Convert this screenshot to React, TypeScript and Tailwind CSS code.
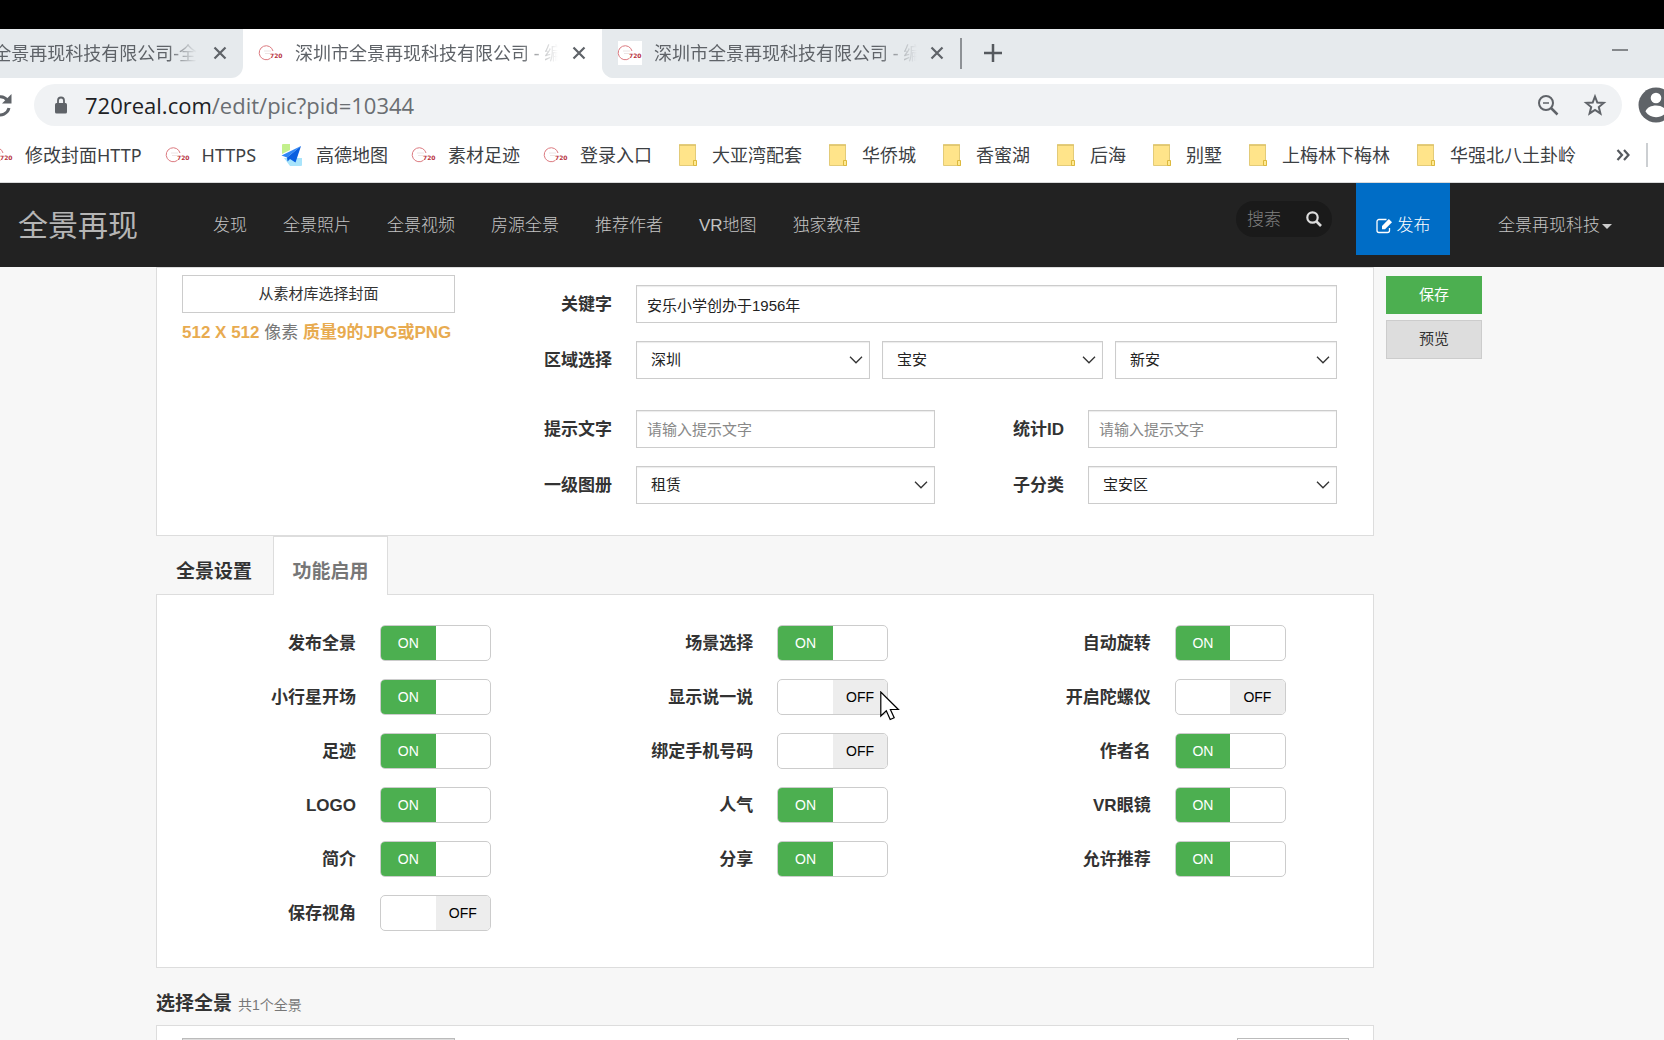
import { useState } from "react";
import type { ReactNode } from "react";

function SiteIcon() {
  return (
    <svg viewBox="0 0 24 24" className="size-6 shrink-0 overflow-visible bg-white" aria-hidden="true">
      <path d="M14 10A7 7 0 1 0 11.500 17.300" fill="none" stroke="#dc7a80" strokeWidth="1" />
      <path d="M5 10h7M6 12.500h5" stroke="#ece4e4" strokeWidth="1" />
      <text x="11" y="16.5" fontSize="6" fontWeight="700" fill="#b8323c" fontFamily="DejaVu Sans, sans-serif">
        720
      </text>
    </svg>
  );
}

function MapIcon() {
  return (
    <svg viewBox="0 0 24 24" className="size-6 shrink-0" aria-hidden="true">
      <path d="M2 2a1 1 0 0 1 1-1h7v6l-8 4z" fill="#c3f08c" />
      <path d="M4 15h18v7a1 1 0 0 1-1 1H10z" fill="#a9e4fb" />
      <path d="M21 3 1.500 12.500l5.500 2z" fill="#2f86f6" />
      <path d="M21 3 7 14.500l.5 4 2.500-2.500 5.500 3.500z" fill="#0a5fe0" />
    </svg>
  );
}

function FolderIcon() {
  return (
    <svg viewBox="0 0 24 24" className="size-6 shrink-0" aria-hidden="true">
      <path d="M3.500 2h16v15.500l1 .5v4.500h-17z" fill="#ffe48a" stroke="#e3cb78" />
      <path d="M17.500 22.500v-5h3v5z" fill="#ffe991" stroke="#dcb93e" />
      <path d="M3 2h17" stroke="#dcc36a" strokeWidth="1.500" />
    </svg>
  );
}

function CloseIcon() {
  return (
    <svg viewBox="0 0 14 14" className="size-3.5" aria-hidden="true">
      <path d="m1.500 1.500 11 11m0-11-11 11" stroke="#5f6368" strokeWidth="2.200" />
    </svg>
  );
}

function Tab({ title, active, cut }: { title: string; active?: boolean; cut?: boolean }) {
  return (
    <div
      className={
        active
          ? "flex w-[359px] shrink-0 items-center rounded-t-lg bg-white px-4 pb-0.5"
          : cut
            ? "flex w-[243px] shrink-0 items-center justify-end rounded-br-xl bg-[#e6eaed] pb-0.5 pr-4"
            : "flex w-[358px] shrink-0 items-center rounded-bl-xl bg-[#e6eaed] px-4 pb-0.5"
      }
    >
      {!cut && <SiteIcon />}
      <span
        className={
          cut
            ? "flex w-[199px] justify-end overflow-hidden whitespace-nowrap mask-r-from-85% mask-r-to-100%"
            : "ml-3 w-[263px] overflow-hidden whitespace-nowrap mask-r-from-85% mask-r-to-100%"
        }
      >
        {title}
      </span>
      <button type="button" aria-label="关闭标签页" className={cut ? "ml-4" : "ml-auto"}>
        <CloseIcon />
      </button>
    </div>
  );
}

function Bookmark({ icon, children }: { icon: ReactNode; children: ReactNode }) {
  return (
    <a href="#" className="flex shrink-0 items-center gap-3">
      {icon}
      {children}
    </a>
  );
}

const folders = ["大亚湾配套", "华侨城", "香蜜湖", "后海", "别墅", "上梅林下梅林", "华强北八土卦岭"];

function Browser() {
  return (
    <div className="shrink-0 font-['Noto_Sans','Noto_Sans_CJK_SC',sans-serif] text-lg">
      <div className="h-[29px] bg-black" />
      <div className="flex h-[49px] bg-white text-[#5f6368]">
        <Tab cut title="全景再现科技有限公司-全" />
        <Tab active title="深圳市全景再现科技有限公司 - 编辑" />
        <div className="flex flex-1 rounded-bl-xl bg-[#e6eaed]">
          <Tab title="深圳市全景再现科技有限公司 - 编辑" />
          <div className="my-auto h-[31px] w-0.5 bg-[#8d9195]" />
          <button type="button" aria-label="新标签页" className="mb-0.5 ml-[22px]">
            <svg viewBox="0 0 18 18" className="size-[18px]" aria-hidden="true">
              <path d="M9 0v18M0 9h18" stroke="#55595e" strokeWidth="2.500" />
            </svg>
          </button>
          <button type="button" aria-label="最小化" className="mb-2 ml-auto mr-9">
            <svg viewBox="0 0 16 2" className="h-0.5 w-4" aria-hidden="true">
              <path d="M0 1h16" stroke="#85888b" strokeWidth="2" />
            </svg>
          </button>
        </div>
      </div>
      <div className="flex h-[54px] items-center overflow-hidden bg-white">
        <button type="button" aria-label="重新加载" className="-ml-3 w-6 shrink-0">
          <svg viewBox="0 0 24 24" className="size-6" aria-hidden="true">
            <path d="M19.500 7.500A9 9 0 1 0 21 15" fill="none" stroke="#5f6368" strokeWidth="3" />
            <path d="M23.500 1v9.500H14z" fill="#5f6368" />
          </svg>
        </button>
        <div className="ml-[22px] flex h-[42px] flex-1 items-center rounded-full bg-[#f0f2f4] pl-5 pr-[15px]">
          <svg viewBox="0 0 14 18" className="h-[18px] w-3.5" aria-hidden="true">
            <rect x="1" y="7" width="12" height="10.500" rx="1.500" fill="#5f6368" />
            <path d="M4 8V4.500a3 3 0 0 1 6 0V8" fill="none" stroke="#5f6368" strokeWidth="1.800" />
          </svg>
          <div className="ml-[17px] flex-1 font-['Open_Sans',sans-serif] text-[22px] leading-7 text-[#6a6e72]">
            <span className="text-[#202124]">720real.com</span>/edit/pic?pid=10344
          </div>
          <button type="button" aria-label="缩放">
            <svg viewBox="0 0 22 22" className="size-[22px]" aria-hidden="true">
              <circle cx="9" cy="9" r="7" fill="none" stroke="#5f6368" strokeWidth="2" />
              <path d="M6 9h6" stroke="#5f6368" strokeWidth="1.500" />
              <path d="m14 14 6.500 6.500" stroke="#5f6368" strokeWidth="2.500" />
            </svg>
          </button>
          <button type="button" aria-label="收藏" className="ml-6">
            <svg viewBox="0 0 24 24" className="size-6" aria-hidden="true">
              <path d="m12 3.500 2.300 6 6.500.4-5 4.200 1.600 6.300-5.400-3.500-5.400 3.500 1.600-6.300-5-4.200 6.500-.4z" fill="none" stroke="#5f6368" strokeWidth="2" />
            </svg>
          </button>
        </div>
        <button type="button" aria-label="用户" className="-mr-2.5 ml-4 shrink-0">
          <svg viewBox="0 0 36 36" className="size-9" aria-hidden="true">
            <circle cx="18" cy="18" r="17.500" fill="#5f6368" />
            <circle cx="18" cy="11" r="5.300" fill="#fff" />
            <path d="M7.500 24.500c2.500-8 18.500-8 21 0-4.500 7.500-16.500 7.500-21 0z" fill="#fff" />
          </svg>
        </button>
      </div>
      <div className="flex h-[51px] items-center gap-6 overflow-hidden border-b border-[#d9dadb] bg-white pb-1 text-[#3c4043]">
        <div className="-ml-[11px] flex shrink-0 items-center gap-6">
          <Bookmark icon={<SiteIcon />}>修改封面HTTP</Bookmark>
          <Bookmark icon={<SiteIcon />}>HTTPS</Bookmark>
          <Bookmark icon={<MapIcon />}>高德地图</Bookmark>
          <Bookmark icon={<SiteIcon />}>素材足迹</Bookmark>
          <Bookmark icon={<SiteIcon />}>登录入口</Bookmark>
          {folders.map((name) => (
            <Bookmark key={name} icon={<FolderIcon />}>
              {name}
            </Bookmark>
          ))}
        </div>
        <button type="button" aria-label="更多书签" className="ml-auto">
          <svg viewBox="0 0 14 12" className="h-3 w-3.5" aria-hidden="true">
            <path d="m1.500 1 4.500 5-4.500 5M8 1l4.500 5L8 11" fill="none" stroke="#55595e" strokeWidth="2.200" />
          </svg>
        </button>
        <div className="-ml-2 mr-4 h-6 w-0.5 bg-[#cccfd2]" />
      </div>
    </div>
  );
}

const links = ["发现", "全景照片", "全景视频", "房源全景", "推荐作者", "VR地图", "独家教程"];

function SiteNav() {
  return (
    <nav className="flex h-[84px] shrink-0 items-center bg-[#222] pt-0.5 text-[17px] font-light text-[#c4c4c4]">
      <a href="#" className="mb-0.5 ml-[18px] text-[30px] font-normal text-[#b5b5b5]">
        全景再现
      </a>
      <div className="ml-[75px] flex gap-9">
        {links.map((name) => (
          <a key={name} href="#">
            {name}
          </a>
        ))}
      </div>
      <form className="mb-3.5 ml-auto flex h-9 w-24 items-center rounded-full bg-[#1a1a1a] pl-[11px] pr-2.5">
        <input aria-label="搜索" placeholder="搜索" className="w-10 bg-transparent pt-0.5 outline-none placeholder:text-[#808080]" />
        <button type="button" aria-label="搜索" className="ml-auto">
          <svg viewBox="0 0 16 16" className="size-4" aria-hidden="true">
            <circle cx="6.500" cy="6.500" r="5.200" fill="none" stroke="#ddd" strokeWidth="2.200" />
            <path d="m10.500 10.500 4.500 4.500" stroke="#ddd" strokeWidth="2.600" />
          </svg>
        </button>
      </form>
      <a href="#" className="-mt-0.5 ml-6 flex h-[72px] w-[94px] items-center justify-center gap-1 self-start bg-[#006dc6] pt-3.5 text-white">
        <svg viewBox="0 0 17 16" className="h-4 w-[17px]" aria-hidden="true">
          <path d="M10.500 1.500H3A2 2 0 0 0 1 3.500v9a2 2 0 0 0 2 2h8.500a2 2 0 0 0 2-2V10" fill="none" stroke="#fff" strokeWidth="1.300" />
          <path d="M6 8 12.800 1l3.200 3.200L9 11.200H6z" fill="#fff" />
        </svg>
        发布
      </a>
      <a href="#" className="ml-12 mr-[52px] flex items-center gap-0.5">
        全景再现科技
        <svg viewBox="0 0 10 5" className="h-[5px] w-2.5" aria-hidden="true">
          <path d="M0 0h10L5 5z" fill="#ccc" />
        </svg>
      </a>
    </nav>
  );
}

const box = "h-[38px] w-full border border-[#ccc] bg-white text-[15px] text-[#222] shadow-[inset_0_1px_1px_rgba(0,0,0,0.08)] outline-none";

function Select({ id, label, value }: { id: string; label?: string; value: string }) {
  return (
    <div className="relative min-w-0 flex-1">
      <select id={id} aria-label={label} className={box + " appearance-none pl-3.5 pr-8"}>
        <option>{value}</option>
      </select>
      <svg viewBox="0 0 14 8" className="pointer-events-none absolute right-[7px] top-[15px] h-2 w-3.5" aria-hidden="true">
        <path d="m1 .8 6 6 6-6" fill="none" stroke="#333" strokeWidth="1.300" />
      </svg>
    </div>
  );
}

function Field({ id, label, narrow, children }: { id: string; label: string; narrow?: boolean; children: ReactNode }) {
  return (
    <div className={narrow ? "flex w-[402px] items-center" : "flex min-w-0 flex-1 items-center"}>
      <label
        htmlFor={id}
        className={
          narrow
            ? "w-[129px] shrink-0 pt-0.5 text-right text-[17px] font-bold"
            : "w-[133px] shrink-0 pt-0.5 text-right text-[17px] font-bold"
        }
      >
        {label}
      </label>
      <div className="ml-6 min-w-0 flex-1">{children}</div>
    </div>
  );
}

function InfoPanel() {
  return (
    <section className="flex border border-[#ddd] bg-white pb-[31px] pl-[25px] pr-9 pt-[7px]">
      <div className="w-[273px] shrink-0">
        <button type="button" className="h-[38px] w-full border border-[#ccc] bg-white text-[15px]">
          从素材库选择封面
        </button>
        <p className="mt-[7px] whitespace-nowrap text-[17px] text-[#777]">
          <b className="text-[#e8ab50]">512 X 512</b> 像素 <b className="text-[#e8ab50]">质量9的JPG或PNG</b>
        </p>
      </div>
      <div className="ml-6 flex min-w-0 flex-1 flex-col gap-[18px] pt-2.5">
        <Field id="keyword" label="关键字">
          <input id="keyword" defaultValue="安乐小学创办于1956年" className={box + " px-2.5"} />
        </Field>
        <Field id="city" label="区域选择">
          <div className="grid grid-cols-[234fr_221fr_222fr] gap-3">
            <Select id="city" value="深圳" />
            <Select id="district" label="区" value="宝安" />
            <Select id="street" label="街道" value="新安" />
          </div>
        </Field>
        <div className="mt-[13px] flex">
          <Field id="hint" label="提示文字">
            <input id="hint" placeholder="请输入提示文字" className={box + " px-2.5 placeholder:text-[#888]"} />
          </Field>
          <Field id="stat" label="统计ID" narrow>
            <input id="stat" placeholder="请输入提示文字" className={box + " px-2.5 placeholder:text-[#888]"} />
          </Field>
        </div>
        <div className="flex">
          <Field id="album" label="一级图册">
            <Select id="album" value="租赁" />
          </Field>
          <Field id="sub" label="子分类" narrow>
            <Select id="sub" value="宝安区" />
          </Field>
        </div>
      </div>
    </section>
  );
}

function Toggle({ label, initial }: { label: string; initial: boolean }) {
  const [on, setOn] = useState(initial);
  return (
    <label className="flex items-center gap-6">
      <span className="w-[187px] pt-0.5 text-right text-[17px] font-bold">{label}</span>
      <input type="checkbox" className="sr-only" checked={on} onChange={() => setOn(!on)} />
      <span className="flex h-9 w-[111px] overflow-hidden rounded-[5px] border border-[#ccc] bg-white text-sm leading-[34px]">
        <span className={on ? "flex-1 bg-[#4caf50] text-center text-white" : "flex-1"}>{on && "ON"}</span>
        <span className={on ? "flex-1" : "flex-1 bg-[#ededed] text-center text-black"}>{!on && "OFF"}</span>
      </span>
    </label>
  );
}

const features: [string, boolean][] = [
  ["发布全景", true],
  ["场景选择", true],
  ["自动旋转", true],
  ["小行星开场", true],
  ["显示说一说", false],
  ["开启陀螺仪", false],
  ["足迹", true],
  ["绑定手机号码", false],
  ["作者名", true],
  ["LOGO", true],
  ["人气", true],
  ["VR眼镜", true],
  ["简介", true],
  ["分享", true],
  ["允许推荐", true],
  ["保存视角", false],
];

function FeaturePanel() {
  return (
    <section>
      <div className="flex h-[58px] text-[19px] font-bold">
        <button type="button" className="w-[117px] pl-5 pt-3.5 text-left">
          全景设置
        </button>
        <button type="button" className="relative -mb-px w-[115px] border border-b-0 border-[#ddd] bg-white pt-3 text-[#777]">
          功能启用
        </button>
      </div>
      <div className="grid grid-cols-3 gap-y-[18px] border border-[#ddd] bg-white px-3 pb-9 pt-[30px]">
        {features.map(([label, on]) => (
          <Toggle key={label} label={label} initial={on} />
        ))}
      </div>
    </section>
  );
}

function Pointer() {
  return (
    <svg viewBox="0 0 20 30" className="pointer-events-none absolute left-[880px] top-[691px] h-[30px] w-5" aria-hidden="true">
      <path d="M.8 1v24l5.500-5.200L10.200 28.500l4-1.800-3.800-8.200h8z" fill="#fff" stroke="#000" strokeWidth="1.200" />
    </svg>
  );
}

export default function App() {
  return (
    <div className="relative flex h-screen flex-col overflow-hidden bg-[#f7f7f7] font-['Liberation_Sans','Noto_Sans_CJK_SC',sans-serif] text-[#333]">
      <Browser />
      <SiteNav />
      <main className="flex items-start pl-[156px] pr-[182px]">
        <div className="min-w-0 flex-1">
          <InfoPanel />
          <FeaturePanel />
          <h2 className="flex h-[57px] items-center gap-1.5 pt-4 text-[19px] font-bold">
            选择全景 <small className="text-sm font-normal text-[#777]">共1个全景</small>
          </h2>
          <section className="flex justify-between border border-[#ddd] bg-white pl-[25px] pr-6 pt-3">
            <div className="h-16 w-[273px] border border-[#bbb] bg-[#ddd]" />
            <div className="h-16 w-28 border border-[#bbb]" />
          </section>
        </div>
        <div className="ml-3 flex w-24 flex-col gap-1.5 pt-[9px] text-[15px]">
          <button type="button" className="h-[38px] bg-[#4caf50] text-white">
            保存
          </button>
          <button type="button" className="h-[39px] border border-[#ccc] bg-[#ddd] text-[#333]">
            预览
          </button>
        </div>
      </main>
      <Pointer />
    </div>
  );
}
